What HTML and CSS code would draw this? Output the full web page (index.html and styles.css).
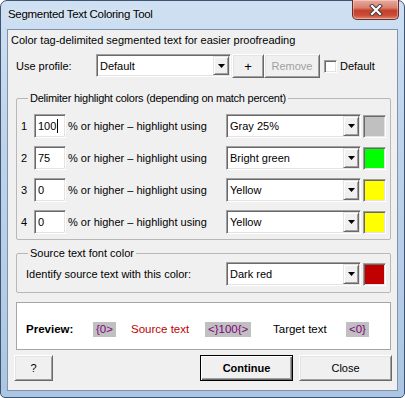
FILE: index.html
```html
<!DOCTYPE html>
<html>
<head>
<meta charset="utf-8">
<title>Segmented Text Coloring Tool</title>
<link rel="stylesheet" href="styles.css">
</head>
<body>
<div class="window">
  <div class="titlebar">
    <span class="title">Segmented Text Coloring Tool</span>
    <div class="closebtn">
      <svg width="14" height="12" viewBox="0 0 14 12">
        <path d="M3 2 L11 10 M11 2 L3 10" stroke="#3a3a3a" stroke-width="4" stroke-linecap="square"/>
        <path d="M3 2 L11 10 M11 2 L3 10" stroke="#ffffff" stroke-width="2.2" stroke-linecap="square"/>
      </svg>
    </div>
  </div>
  <div class="client">
    <div class="intro">Color tag-delimited segmented text for easier proofreading</div>
    <div class="profile">
      <span class="profile-label">Use profile:</span>
      <div class="combo combo-profile"><span class="combo-val">Default</span><span class="drop"><svg width="7" height="4" viewBox="0 0 7 4"><polygon points="0,0 7,0 3.5,4" fill="#000"/></svg></span></div>
      <div class="btn btn-plus">+</div>
      <div class="btn btn-remove">Remove</div>
      <span class="checkbox"></span>
      <span class="check-label">Default</span>
    </div>

    <fieldset class="group group-delims">
      <legend class="legend-tight">Delimiter highlight colors (depending on match percent)</legend>
      <div class="delim-grid">
        <span class="num">1</span>
        <div class="field">100<span class="caret"></span></div>
        <span class="rule">% or higher – highlight using</span>
        <div class="combo"><span class="combo-val">Gray 25%</span><span class="drop"><svg width="7" height="4" viewBox="0 0 7 4"><polygon points="0,0 7,0 3.5,4" fill="#000"/></svg></span></div>
        <span class="swatch sw-gray"></span>

        <span class="num">2</span>
        <div class="field">75</div>
        <span class="rule">% or higher – highlight using</span>
        <div class="combo"><span class="combo-val">Bright green</span><span class="drop"><svg width="7" height="4" viewBox="0 0 7 4"><polygon points="0,0 7,0 3.5,4" fill="#000"/></svg></span></div>
        <span class="swatch sw-green"></span>

        <span class="num">3</span>
        <div class="field">0</div>
        <span class="rule">% or higher – highlight using</span>
        <div class="combo"><span class="combo-val">Yellow</span><span class="drop"><svg width="7" height="4" viewBox="0 0 7 4"><polygon points="0,0 7,0 3.5,4" fill="#000"/></svg></span></div>
        <span class="swatch sw-yellow"></span>

        <span class="num">4</span>
        <div class="field">0</div>
        <span class="rule">% or higher – highlight using</span>
        <div class="combo"><span class="combo-val">Yellow</span><span class="drop"><svg width="7" height="4" viewBox="0 0 7 4"><polygon points="0,0 7,0 3.5,4" fill="#000"/></svg></span></div>
        <span class="swatch sw-yellow"></span>
      </div>
    </fieldset>

    <fieldset class="group group-source">
      <legend>Source text font color</legend>
      <div class="source-grid">
        <span class="source-label">Identify source text with this color:</span>
        <div class="combo"><span class="combo-val">Dark red</span><span class="drop"><svg width="7" height="4" viewBox="0 0 7 4"><polygon points="0,0 7,0 3.5,4" fill="#000"/></svg></span></div>
        <span class="swatch sw-darkred"></span>
      </div>
    </fieldset>

    <div class="preview">
      <span class="preview-label">Preview:</span>
      <span class="tag">{0&gt;</span>
      <span class="src-text">Source text</span>
      <span class="tag">&lt;}100{&gt;</span>
      <span class="tgt-text">Target text</span>
      <span class="tag">&lt;0}</span>
    </div>

    <div class="buttons">
      <div class="btn btn-help">?</div>
      <div class="spacer"></div>
      <div class="btn btn-default">Continue</div>
      <div class="btn btn-close">Close</div>
    </div>
  </div>
</div>
</body>
</html>
```

FILE: styles.css
```css
* {
  box-sizing: border-box;
  margin: 0;
  padding: 0;
}

html, body {
  width: 405px;
  height: 398px;
  overflow: hidden;
  background: #ffffff;
}

body {
  font-family: "Liberation Sans", Arial, sans-serif;
  font-size: 11px;
  color: #000;
}

.window {
  width: 405px;
  height: 398px;
  border: 1px solid #3f5470;
  border-radius: 7px 7px 5px 5px;
  background: linear-gradient(to bottom, #cfe0f2 0%, #c0d5ec 30%, #b5cde7 70%, #abc5e2 100%);
  padding: 0 6px 6px;
  display: flex;
  flex-direction: column;
}

.titlebar {
  height: 28px;
  display: flex;
  justify-content: space-between;
  align-items: flex-start;
}

.title {
  font-size: 11.5px;
  letter-spacing: -0.3px;
  line-height: 15px;
  padding: 6px 0 0 1px;
  color: #000;
  text-shadow: 0 0 6px rgba(255, 255, 255, 0.9);
}

.closebtn {
  width: 47px;
  height: 20px;
  margin: -1px -1px 0 0;
  border: 1px solid #6b2b22;
  border-top: none;
  border-radius: 0 0 5px 5px;
  background: linear-gradient(to bottom, #e9a99c 0%, #d98270 40%, #c5402b 55%, #c94b36 80%, #dc8a72 100%);
  box-shadow: inset 0 0 0 1px rgba(255, 255, 255, 0.35);
  display: flex;
  align-items: center;
  justify-content: center;
}

.client {
  flex: 1;
  border: 1px solid #8093aa;
  background: #f0f0f0;
  display: flex;
  flex-direction: column;
  padding-bottom: 8px;
}

.intro {
  margin: 3px 0 0 3px;
  line-height: 14px;
  height: 14px;
}

/* profile row */
.profile {
  margin: 7px 0 0 8px;
  height: 24px;
  display: flex;
  align-items: center;
}

.profile-label {
  width: 80px;
}

.combo {
  width: 135px;
  height: 24px;
  background: #fff;
  border: 1px solid;
  border-color: #a0a0a0 #ffffff #ffffff #a0a0a0;
  box-shadow: inset 1px 1px 0 #696969, inset -1px -1px 0 #e3e3e3;
  display: flex;
  align-items: stretch;
  padding: 1px;
}

.combo-profile {
  height: 23px;
  margin-top: -1px;
}

.combo-val {
  flex: 1;
  display: flex;
  align-items: center;
  padding-left: 2px;
}

.drop {
  width: 16px;
  background: #f0f0f0;
  border: 1px solid;
  border-color: #e3e3e3 #696969 #696969 #e3e3e3;
  box-shadow: inset 1px 1px 0 #ffffff, inset -1px -1px 0 #a0a0a0;
  display: flex;
  align-items: center;
  justify-content: center;
}

.btn {
  height: 24px;
  background: #f0f0f0;
  border: 1px solid;
  border-color: #ffffff #696969 #696969 #ffffff;
  box-shadow: inset 1px 1px 0 #e3e3e3, inset -1px -1px 0 #a0a0a0;
  display: flex;
  align-items: center;
  justify-content: center;
}

.btn-plus {
  width: 32px;
  margin-left: 1px;
  font-size: 13px;
}

.btn-remove {
  width: 56px;
  color: #a0a0a0;
}

.checkbox {
  width: 13px;
  height: 13px;
  margin-left: 4px;
  background: #fff;
  border: 1px solid;
  border-color: #a0a0a0 #ffffff #ffffff #a0a0a0;
  box-shadow: inset 1px 1px 0 #696969, inset -1px -1px 0 #e3e3e3;
}

.check-label {
  margin-left: 3px;
}

/* group boxes */
.group {
  margin-left: 8px;
  width: 375px;
  border: 1px solid #b8b8b8;
  border-radius: 2px;
  padding: 0 0 0 4px;
}

.group legend {
  margin-left: 7px;
  padding: 0 2px;
  line-height: 14px;
}

.group legend.legend-tight {
  letter-spacing: -0.25px;
}

.group-delims {
  margin-top: 13px;
  padding-top: 9px;
  padding-bottom: 5px;
}

.delim-grid {
  display: grid;
  grid-template-columns: 13px 32px 160px 135px 25px;
  grid-auto-rows: 24px;
  row-gap: 8px;
  align-items: center;
}

.delim-grid .swatch,
.source-grid .swatch {
  margin-left: 2px;
}

.field {
  height: 24px;
  background: #fff;
  border: 1px solid;
  border-color: #a0a0a0 #ffffff #ffffff #a0a0a0;
  box-shadow: inset 1px 1px 0 #696969, inset -1px -1px 0 #e3e3e3;
  display: flex;
  align-items: center;
  padding-left: 3px;
}

.caret {
  display: inline-block;
  width: 1px;
  height: 14px;
  background: #000;
  margin-left: 1px;
}

.rule {
  padding-left: 2px;
}

.swatch {
  width: 23px;
  height: 23px;
  border: 1px solid;
  border-color: #a0a0a0 #ffffff #ffffff #a0a0a0;
  box-shadow: inset 1px 1px 0 #696969, inset -1px -1px 0 #e3e3e3;
}

.sw-gray { background: #c0c0c0; }
.sw-green { background: #00ff00; }
.sw-yellow { background: #ffff00; }
.sw-darkred { background: #c00000; }

.group-source {
  margin-top: 6px;
  padding-top: 2px;
  padding-bottom: 6px;
}

.source-grid {
  display: grid;
  grid-template-columns: 205px 135px 25px;
  grid-auto-rows: 24px;
  align-items: center;
}

.source-label {
  padding-left: 5px;
}

/* preview */
.preview {
  margin: 9px 0 0 8px;
  width: 375px;
  height: 48px;
  background: #fff;
  border: 1px solid #a6a6a6;
  padding: 6px 0 0 9px;
  display: grid;
  grid-template-columns: 67px 38px 74px 68px 73px 24px;
  align-items: center;
  justify-items: start;
  font-size: 11.5px;
}

.preview-label {
  font-weight: bold;
}

.tag {
  background: #c0c0c0;
  color: #800080;
  line-height: 15px;
  padding: 0 3px;
}

.src-text {
  color: #c00000;
}

.tgt-text {
  color: #000;
}

/* bottom buttons */
.buttons {
  margin-top: 5px;
  height: 26px;
  display: flex;
  padding: 0 5px 0 6px;
}

.buttons .btn {
  height: 26px;
}

.btn-help {
  width: 39px;
}

.spacer {
  flex: 1;
}

.btn-default {
  width: 93px;
  font-weight: bold;
  border-color: #000;
  box-shadow: inset 1px 1px 0 #ffffff, inset -1px -1px 0 #696969, inset -2px -2px 0 #a0a0a0;
}

.btn-close {
  width: 93px;
  margin-left: 6px;
}
```
